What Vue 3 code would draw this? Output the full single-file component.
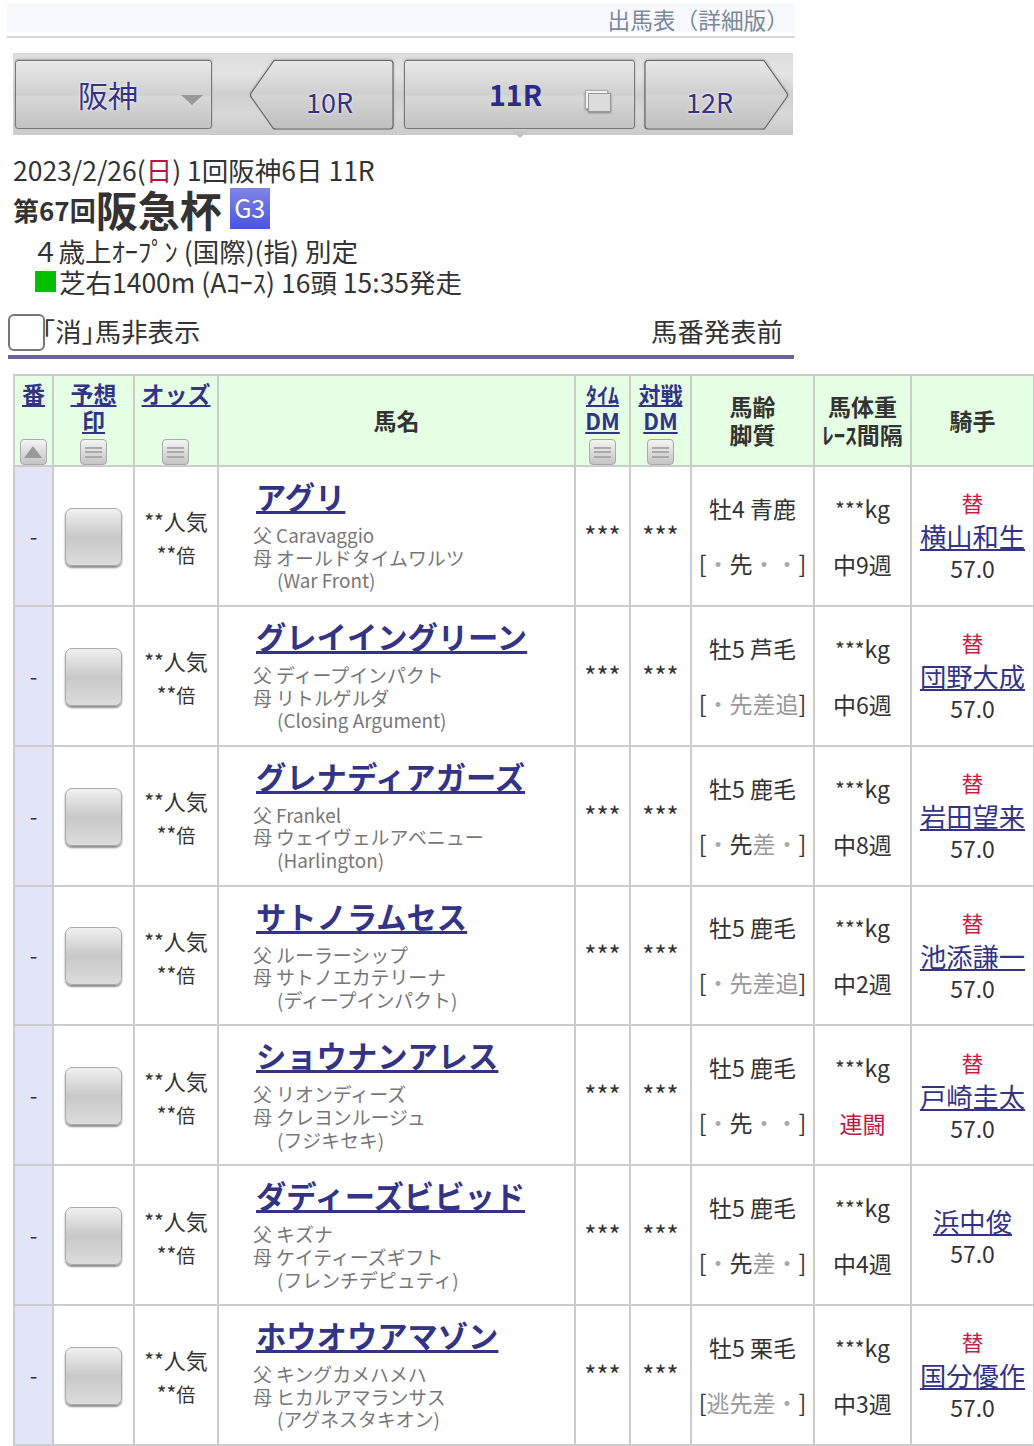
<script setup>
const horses = [
  { name: 'アグリ', sire: 'Caravaggio', dam: 'オールドタイムワルツ', bms: '(War Front)', age: '牡4 青鹿', q: ['・', '先', '・', '・'], on: [0,1,0,0], gap: '中9週', jockey: '横山和生', sub: true },
  { name: 'グレイイングリーン', sire: 'ディープインパクト', dam: 'リトルゲルダ', bms: '(Closing Argument)', age: '牡5 芦毛', q: ['・', '先', '差', '追'], on: [0,0,0,0], gap: '中6週', jockey: '団野大成', sub: true },
  { name: 'グレナディアガーズ', sire: 'Frankel', dam: 'ウェイヴェルアベニュー', bms: '(Harlington)', age: '牡5 鹿毛', q: ['・', '先', '差', '・'], on: [0,1,0,0], gap: '中8週', jockey: '岩田望来', sub: true },
  { name: 'サトノラムセス', sire: 'ルーラーシップ', dam: 'サトノエカテリーナ', bms: '(ディープインパクト)', age: '牡5 鹿毛', q: ['・', '先', '差', '追'], on: [0,0,0,0], gap: '中2週', jockey: '池添謙一', sub: true },
  { name: 'ショウナンアレス', sire: 'リオンディーズ', dam: 'クレヨンルージュ', bms: '(フジキセキ)', age: '牡5 鹿毛', q: ['・', '先', '・', '・'], on: [0,1,0,0], gap: '連闘', red: true, jockey: '戸崎圭太', sub: true },
  { name: 'ダディーズビビッド', sire: 'キズナ', dam: 'ケイティーズギフト', bms: '(フレンチデピュティ)', age: '牡5 鹿毛', q: ['・', '先', '差', '・'], on: [0,1,0,0], gap: '中4週', jockey: '浜中俊', sub: false },
  { name: 'ホウオウアマゾン', sire: 'キングカメハメハ', dam: 'ヒカルアマランサス', bms: '(アグネスタキオン)', age: '牡5 栗毛', q: ['逃', '先', '差', '・'], on: [0,0,0,0], gap: '中3週', jockey: '国分優作', sub: true },
]
</script>

<template>
  <div class="page">
    <div class="top">
      <div class="crumb">出馬表（詳細版）</div>
    </div>

    <nav class="bar">
      <a class="btn venue">
        <span class="venue-t">阪神</span>
        <i class="caret"></i>
      </a>
      <a class="btn prev">
        <svg class="shape" width="146" height="72" viewBox="0 0 146 72">
          <defs>
            <linearGradient id="g1" x1="0" y1="0" x2="0" y2="1">
              <stop offset="0" stop-color="#e8e8e8" /><stop offset=".48" stop-color="#cfcfcf" />
              <stop offset=".52" stop-color="#d4d4d4" /><stop offset="1" stop-color="#bfbfbf" />
            </linearGradient>
          </defs>
          <path d="M27 1.500H141a3 3 0 0 1 3 3V67a3 3 0 0 1-3 3H27a3 3 0 0 1-3-1L2.500 38.500a4 4 0 0 1 0-5L24 3a3 3 0 0 1 3-1.500z" fill="url(#g1)" stroke="#666" stroke-width="1.2" />
        </svg>
        <span class="race-t">10R</span>
      </a>
      <a class="btn cur">
        <span class="cur-t">11R</span>
        <svg class="win" width="28" height="24" viewBox="0 0 28 24">
          <rect x="1.500" y="1.500" width="22" height="18" fill="#f2f2f2" stroke="#aaa" />
          <rect x="4.500" y="4.500" width="22" height="18" fill="#dcdcdc" stroke="#999" />
        </svg>
        <i class="notch"></i>
      </a>
      <a class="btn next">
        <svg class="shape" width="145" height="72" viewBox="0 0 145 72">
          <path d="M118 1.500H4a3 3 0 0 0-3 3V67a3 3 0 0 0 3 3h114a3 3 0 0 0 3-1l21.500-30.500a4 4 0 0 0 0-5L121 3a3 3 0 0 0-3-1.500z" fill="url(#g1)" stroke="#666" stroke-width="1.2" />
        </svg>
        <span class="race-t">12R</span>
      </a>
    </nav>

    <section class="info">
      <div class="date">2023/2/26(<span class="sun">日</span>) 1回阪神6日 11R</div>
      <div class="title">
        <span class="kai">第67回</span><span class="rname">阪急杯</span><span class="grade">G3</span>
      </div>
      <div class="line ind">４歳上ｵｰﾌﾟﾝ (国際)(指) 別定</div>
      <div class="line course"><i class="sq"></i>芝右1400m (Aｺｰｽ) 16頭 15:35発走</div>
    </section>

    <div class="opts">
      <label class="chk"><i class="box"></i><span class="chk-t">｢消｣馬非表示</span></label>
      <span>馬番発表前</span>
    </div>

    <table class="tbl">
      <colgroup>
        <col style="width:39px" /><col style="width:81px" /><col style="width:84px" /><col style="width:357px" />
        <col style="width:55px" /><col style="width:61px" /><col style="width:123px" /><col style="width:97px" /><col style="width:123px" />
      </colgroup>
      <thead>
        <tr>
          <th class="sort"><a>番</a><i class="sb"><b class="up"></b></i></th>
          <th class="sort"><a>予想<br />印</a><i class="sb"><b class="lines"></b></i></th>
          <th class="sort"><a class="odds-h">オッズ</a><i class="sb"><b class="lines"></b></i></th>
          <th>馬名</th>
          <th class="sort narrow"><a>ﾀｲﾑ<br />DM</a><i class="sb"><b class="lines"></b></i></th>
          <th class="sort narrow"><a>対戦<br />DM</a><i class="sb"><b class="lines"></b></i></th>
          <th>馬齢<br />脚質</th>
          <th>馬体重<br />ﾚｰｽ間隔</th>
          <th>騎手</th>
        </tr>
      </thead>
      <tbody>
        <tr v-for="h in horses" :key="h.name">
          <td class="num">-</td>
          <td class="mark"><i class="markbtn"></i></td>
          <td class="odds"><div class="ninki"><small>**</small>人気</div><div class="bai"><small>**</small><span>倍</span></div></td>
          <td class="horse">
            <a class="hname">{{ h.name }}</a>
            <div class="ped">
              <div>父 {{ h.sire }}</div>
              <div>母 {{ h.dam }}</div>
              <div class="bms">{{ h.bms }}</div>
            </div>
          </td>
          <td class="dm">***</td>
          <td class="dm">***</td>
          <td class="age">
            <div>{{ h.age }}</div>
            <div class="q">[<span v-for="(c, i) in h.q" :key="i" :class="{ dot: c === '・', dim: c !== '・' && !h.on[i] }">{{ c }}</span>]</div>
          </td>
          <td class="wt">
            <div><small>***</small>kg</div>
            <div class="gap" :class="{ red: h.red }">{{ h.gap }}</div>
          </td>
          <td class="jk" :class="{ nosub: !h.sub }">
            <div v-if="h.sub" class="sub">替</div>
            <a class="jname">{{ h.jockey }}</a>
            <div>57.0</div>
          </td>
        </tr>
      </tbody>
    </table>
  </div>
</template>

<style>
html, body { margin: 0; background: #fff; }
</style>

<style scoped>
.page {
  width: 1034px;
  height: 1446px;
  overflow: hidden;
  font-family: "Noto Sans CJK JP", "Noto Sans", sans-serif;
  color: #333;
}
.top {
  margin: 3px 239px 15px 7px;
  height: 35px;
  box-sizing: border-box;
  background: linear-gradient(#f8f8ff 29px, #fff 29px);
  border-bottom: 2px solid #d8d8d8;
}
.crumb {
  text-align: right;
  font-size: 22.7px;
  line-height: 34px;
  height: 29px;
  color: #7b8a99;
  padding-right: 6px;
}
.bar {
  margin: 0 241px 0 13px;
  height: 82px;
  display: flex;
  align-items: flex-start;
  background: linear-gradient(#dcdcdc, #e4e4e4 25%, #d0d0d0 50%, #d8d8d8 75%, #cacaca);
  padding-top: 7px;
  box-sizing: border-box;
}
.btn { position: relative; display: flex; height: 69px; box-sizing: border-box; color: #333388; }
.venue, .cur {
  background: linear-gradient(#e8e8e8, #d2d2d2 46%, #cfcfcf 50%, #d8d8d8 54%, #c2c2c2);
  border: 1px solid #777;
  border-radius: 3px;
  box-shadow: 0 -1px 2px rgba(0,0,0,.25);
}
.venue { width: 197px; margin-left: 2px; }
.venue-t { position: absolute; left: 62px; top: 15px; font-size: 30px; line-height: 36px; text-shadow: 0 0 3px #fff; }
.caret {
  position: absolute; left: 165px; top: 34px;
  border-style: solid; border-width: 10px 11px 0; border-color: #999 transparent transparent;
}
.prev { width: 145px; margin-left: 37px; }
.next { width: 145px; margin-left: 9px; }
.shape { position: absolute; left: 0; top: -1px; filter: drop-shadow(0 -1px 1px rgba(0,0,0,.2)); }
.race-t { position: relative; margin: 24px auto 0; font-size: 27px; line-height: 36px; left: 8px; text-shadow: 0 0 3px #fff; }
.next .race-t { left: -7px; }
.cur { width: 231px; margin-left: 10px; }
.cur-t { position: absolute; left: 84px; top: 14px; font-size: 28.5px; line-height: 38px; font-weight: 700; color: #2a2a8a; }
.win { position: absolute; left: 179px; top: 28px; filter: drop-shadow(0 1px 1px rgba(0,0,0,.4)); }
.notch {
  position: absolute; left: 107px; top: 70px;
  border-style: solid; border-width: 7px 8px 0; border-color: #c4c4c4 transparent transparent;
}
.info { margin: 17px 0 0 13px; font-size: 26.5px; }
.date { line-height: 36px; height: 36px; white-space: nowrap; }
.sun { color: #b0183c; }
.title { display: flex; align-items: center; height: 48px; margin-top: -3px; color: #333; font-weight: 700; }
.kai { font-size: 26px; }
.rname { font-size: 42px; line-height: 48px; }
.grade {
  width: 40px; height: 41px; margin-left: 8px; margin-top: -1px;
  background: linear-gradient(#7f86e6, #4a54e0);
  color: #fff; font-size: 25px; font-weight: 400; text-align: center; line-height: 38px;
}
.line { line-height: 31px; height: 31px; white-space: nowrap; }
.ind { padding-left: 19px; margin-top: 2px; }
.course { padding-left: 22px; display: flex; align-items: center; }
.sq { width: 21px; height: 21px; background: #00c000; margin-right: 3px; flex: none; }
.opts {
  margin: 13px 240px 0 8px;
  display: flex; justify-content: space-between; align-items: center;
  height: 40px;
  font-size: 26.4px;
  border-bottom: 4px solid #66669a;
  padding-right: 11px;
  padding-bottom: 5px;
}
.chk { display: flex; align-items: center; }
.chk-t { margin-left: -3px; }
.box {
  width: 33px; height: 33px; margin-top: 4px; border: 2px solid #777; border-radius: 6px; flex: none; background: #fff;
}
.tbl {
  position: relative;
  margin: 15px 0 0 13px;
  width: 1021px;
  table-layout: fixed;
  border-collapse: collapse;
}
th, td { border: 2px solid #cccccc; padding: 0; text-align: center; box-sizing: border-box; }
th {
  height: 91px;
  background: #e4ffe4;
  font-size: 23px;
  font-weight: 700;
  line-height: 28px;
  color: #333;
  padding-bottom: 2px;
}
th a { color: #333388; text-decoration: underline; }
.sort { position: relative; vertical-align: top; padding-top: 4px; line-height: 27px; }
.narrow { font-size: 22px; line-height: 27px; }
.sb {
  position: absolute; left: 50%; bottom: 0; margin-left: -14px;
  width: 27px; height: 26px; box-sizing: border-box;
  background: linear-gradient(#f4f4f4, #c4c4c4);
  border: 1px solid #aaa; border-radius: 4px;
  display: flex; align-items: center; justify-content: center;
}
.up { border-style: solid; border-width: 0 9px 12px; border-color: transparent transparent #9a9a9a; }
.lines { width: 17px; height: 11px; border-top: 2px solid #aaa; border-bottom: 2px solid #aaa; box-sizing: border-box; position: relative; }
.lines::after { content: ""; position: absolute; left: 0; right: 0; top: 2.5px; height: 2px; background: #aaa; }
td { height: 139.85px; font-size: 24px; line-height: 32px; color: #333; background: #fff; }
.num { background: #e2e4f8; font-size: 22px; padding-bottom: 2px; }
.markbtn {
  display: block; width: 57px; height: 58px; margin: 2px auto 0; box-sizing: border-box;
  background: linear-gradient(#f0f0f0, #c8c8c8 50%, #dcdcdc);
  border: 1px solid #aaa; border-radius: 7px;
  box-shadow: 0 2px 2px rgba(0,0,0,.45);
}
.odds { line-height: 33px; padding-top: 4px; }
.ninki { font-size: 22px; margin-bottom: -2px; }
.odds small, .wt small { font-size: 21px; }
.bai span { font-size: 19px; }
.horse { text-align: left; vertical-align: top; padding-left: 34px; }
.hname {
  display: inline-block; margin: 8px 0 0 3px; font-size: 30.3px; line-height: 42px; font-weight: 700;
  color: #333388; text-decoration: underline; text-underline-offset: 2px; white-space: nowrap;
}
.ped { font-size: 18.9px; line-height: 22.7px; color: #777; margin-top: 7px; white-space: nowrap; }
.bms { padding-left: 24px; }
.dm { font-size: 26px; padding-bottom: 2px; }
.age { font-size: 23px; line-height: 34px; }
.age > div:first-child { margin-bottom: 21px; margin-top: -1px; }
.q { font-size: 23px; white-space: nowrap; }
.q > span { display: inline-block; width: 23px; }
.dot { color: #aaa; }
.dim { color: #999; }
.wt { font-size: 23px; line-height: 34px; }
.wt .gap { margin-top: 21px; }
.red { color: #c01840; }
.jk { font-size: 23px; line-height: 33px; }
.nosub { padding-top: 4px; }
.sub { color: #c81e46; font-size: 22px; line-height: 33px; }
.jname { color: #333388; text-decoration: underline; font-size: 26.3px; line-height: 33px; display: block; }
</style>
